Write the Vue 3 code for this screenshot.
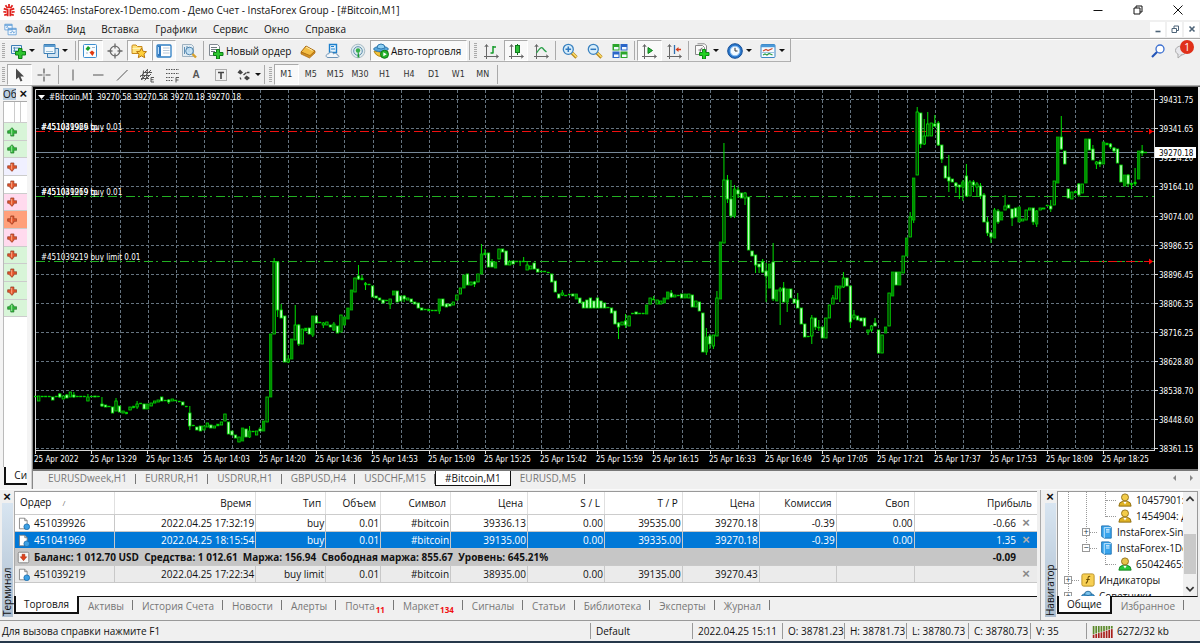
<script setup>
const icons = {
  newChart: '<path d="M1.5 2.5h10v8h-10z" fill="#eaf4fb" stroke="#3d7fb5"/><path d="M3 5h7M3 8h7M4.500 4v5" stroke="#5b93bd" fill="none"/><path d="M8.500 5.500h3.500v3h3.500v3.500h-3.500v3.500h-3.500v-3.500H5.500v-3.500h3z" fill="#2fc52f" stroke="#0d7d18"/>',
  profiles: '<path d="M4.500 5.500h11v9h-11z" fill="#cfe3f2" stroke="#3d7fb5"/><path d="M1 1.500h11v9H1z" fill="#f2f9fd" stroke="#3d7fb5"/><path d="M1 3h11" stroke="#5a9bd0" stroke-width="2"/><path d="M3 8.500h7" stroke="#9cc0d8"/>',
  market: '<rect x="1.500" y="1.500" width="13" height="13" rx="1" fill="#f9fcff" stroke="#3d8ed0"/><path d="M3.500 6l2.500-3 2.500 2-2.500 3z" fill="#18a028"/><path d="M7.500 9.500l2.500-2 2.500 2-2 3.500z" fill="#e23a10"/><path d="M4 10h2M10 4.500h3" stroke="#a0b8cc"/>',
  cross: '<circle cx="8" cy="8" r="4.800" fill="none" stroke="#6a6a6a" stroke-width="1.300"/><path d="M8 .5v5M8 10.500v5M.5 8h5M10.500 8h5" stroke="#6a6a6a" stroke-width="1.300"/>',
  folder: '<path d="M1 3q0-1 1-1h3l1.500 1.500H11v7H1z" fill="#ffe27a" stroke="#c98a1a"/><path d="M1.500 5.500h9" stroke="#fff3b8"/><path d="M10.500 5l1.600 3.300 3.400.4-2.500 2.400.7 3.600-3.200-1.800-3.200 1.800.7-3.600-2.500-2.400 3.400-.4z" fill="#ffd03a" stroke="#b9770e"/>',
  list: '<rect x="1" y="2" width="14" height="12" rx="1" fill="#fff" stroke="#2f7fc4" stroke-width="1.300"/><rect x="1.500" y="2.500" width="3.500" height="11" fill="#2f78bf"/><path d="M7 5h6.500M7 7.500h6.500M7 10h6.500" stroke="#b8c8d8"/><path d="M2.500 4v7" stroke="#bfe0ff"/>',
  tester: '<path d="M1.500 1.500h9l2 2v10h-11z" fill="#e4edf3" stroke="#9fb2c0"/><path d="M3.500 4v7M6 3v4M8 4v5" stroke="#5f8fb4"/><circle cx="8.500" cy="8" r="3.800" fill="#bfe0f5" fill-opacity=".8" stroke="#4e83ad"/><path d="M11.500 11l3.500 3.500" stroke="#d6a02c" stroke-width="2.400"/>',
  order: '<path d="M1.500 1.500h8l2 2v9h-10z" fill="#fdfdfd" stroke="#808890"/><path d="M3 4.500h6M3 6.500h6M3 8.500h4" stroke="#707880"/><path d="M8.500 6.500h3v3h3.500v3h-3.500v3.500h-3V12.500H5.500v-3h3z" fill="#2fc52f" stroke="#0d7d18"/>',
  gold: '<path d="M1 9l5-6 9 5-5 5.500z" fill="#f3bd45" stroke="#a9690f"/><path d="M1 9v2l8.500 4 5.500-5V8l-5 4.500z" fill="#d08f22" stroke="#a9690f" stroke-width=".7"/><path d="M6 4l6.500 3.500" stroke="#fff0ae"/>',
  cloud: '<path d="M4.500 1.500h7v8h-7z" fill="#e7f4fd" stroke="#1e80cc" stroke-width="1.400"/><path d="M6 3.500h3M6 6h4" stroke="#1e80cc"/><path d="M3 14.500c-3 0-2-4 .5-3.500 1-2.500 4.500-2.500 5 0 1.500-1.500 4-.5 3.500 1 2.500 0 2.500 2.500 0 2.500z" fill="#f4f7fa" stroke="#6d93b5"/>',
  signal: '<circle cx="8" cy="8" r="6.800" fill="#dfeaee" stroke="#a9bcc6"/><circle cx="8" cy="8" r="4.300" fill="none" stroke="#5d8fae"/><path d="M8 6l1.500 8.500h-2z" fill="#1c9a32"/><circle cx="8" cy="7.500" r="2.200" fill="#35b04a"/>',
  robot: '<path d="M1 8q7 3 14 0l-1.500 3q-5.500 5-11 0z" fill="#f3c53b" stroke="#b58612"/><ellipse cx="8" cy="6" rx="7.300" ry="2.600" fill="#58a7dc" stroke="#2f78ad"/><path d="M4 5q0-4 4-4t4 4q-4 2-8 0z" fill="#8fd0f4" stroke="#2f78ad"/><circle cx="11.500" cy="11.300" r="4" fill="#24b32c" stroke="#0b7a14"/><path d="M10.300 9.300l3.400 2-3.400 2z" fill="#fff"/>',
  bars: '<path d="M3.500 2v11.500H15M1.800 4l1.700-2.500L5.200 4M13 11.800l2.500 1.700-2.500 1.700M1 13.500h2.500V16" fill="none" stroke="#666"/><path d="M10 3v7.500M10 4h3M7.500 10h2.500" stroke="#149a2a" stroke-width="1.500" fill="none"/>',
  candles: '<path d="M3.500 2v11.500H15M1.800 4l1.700-2.500L5.200 4M13 11.800l2.500 1.700-2.500 1.700M1 13.500h2.500V16" fill="none" stroke="#666"/><path d="M9.500 1v11" stroke="#107a1e"/><rect x="7.500" y="2.500" width="4" height="7" fill="#2fc03a" stroke="#107a1e"/>',
  line: '<path d="M3.500 2v11.500H15M1.800 4l1.700-2.500L5.200 4M13 11.800l2.500 1.700-2.500 1.700M1 13.500h2.500V16" fill="none" stroke="#666"/><path d="M3.500 10Q8 3 9.500 5t4 4" stroke="#2ba04a" stroke-width="1.300" fill="none"/>',
  zoomIn: '<path d="M9.500 9.500l5 5" stroke="#b8871a" stroke-width="3.200"/><path d="M10 9.500l4.500 4.500" stroke="#ffe06b" stroke-width="1.500"/><circle cx="6.300" cy="6.300" r="5" fill="#d8eefb" stroke="#3b82c0" stroke-width="1.300"/><path d="M3.500 6.300h5.600M6.300 3.500v5.600" stroke="#2f78bf" stroke-width="1.500"/>',
  zoomOut: '<path d="M9.500 9.500l5 5" stroke="#b8871a" stroke-width="3.200"/><path d="M10 9.500l4.500 4.500" stroke="#ffe06b" stroke-width="1.500"/><circle cx="6.300" cy="6.300" r="5" fill="#d8eefb" stroke="#3b82c0" stroke-width="1.300"/><path d="M3.500 6.300h5.600" stroke="#2f78bf" stroke-width="1.500"/>',
  tile: '<path d="M.5 1h7v6.500h-7zM8.500 8.500h7V15h-7z" fill="#2ba52b"/><path d="M8.500 1h7v6.500h-7zM.5 8.500h7V15h-7z" fill="#2b66c8"/><path d="M2 4h4.500v2.500H2zM10 4h4.500v2.500H10zM2 11.500h4.500V14H2zM10 11.500h4.500V14H10z" fill="#f4faff"/>',
  scroll: '<path d="M3.500 2v11.500H15M1.800 4l1.700-2.500L5.200 4M13 11.800l2.500 1.700-2.500 1.700M1 13.500h2.500V16" fill="none" stroke="#666"/><path d="M7 4.500l4.500 3L7 10.500z" fill="#23b83a" stroke="#0d7d18"/>',
  shift: '<path d="M3.500 2v11.500H15M1.800 4l1.700-2.500L5.200 4M13 11.800l2.500 1.700-2.500 1.700M1 13.500h2.500V16" fill="none" stroke="#666"/><path d="M8.500 2v9" stroke="#2d6fb0" stroke-width="1.300"/><path d="M9.500 6.500l3-2.500v1.800H15v1.500h-2.500V9z" fill="#d43c1c"/>',
  indicators: '<path d="M1.500 2.500h7l2 2v7h-9zM3.500.8h7l2 2v7" fill="#fafafa" stroke="#888"/><path d="M6 9q1-5 2.500-4M4.500 7h3" stroke="#666" fill="none"/><path d="M8.500 6.500h3v3h3.500v3h-3.500v3.500h-3V12.500H5.500v-3h3z" fill="#20d020" stroke="#0a8a14"/>',
  clock: '<circle cx="8" cy="8" r="7.300" fill="#2876cc" stroke="#164f96"/><circle cx="8" cy="8" r="4.800" fill="#f4faff" stroke="#8ec3f5"/><path d="M8 4.800V8h2.500" stroke="#333" fill="none"/>',
  template: '<rect x="1" y="1.500" width="14" height="13" rx="1" fill="#f6fbff" stroke="#3b86c6"/><path d="M1 3h14" stroke="#4a98d8" stroke-width="2.500"/><path d="M3 8l3-1.500 2 1 4.500-2" stroke="#d04a2c" fill="none" stroke-width="1.200"/><path d="M3 12l2-1 2 1 2-1.500 3.500 1.500" stroke="#2d9d4a" fill="none" stroke-width="1.200"/><path d="M2 9.500h12" stroke="#9fc4e0"/>',
  cursor: '<path d="M5 1.500v11l2.700-2.300 1.800 4.300 1.900-.8-1.900-4.200H13z" fill="#4a4a4a"/>',
  plus: '<path d="M8 1.500v5M8 9.500v5M1.500 8h5M9.500 8h5M8 7.500v1" stroke="#555" stroke-width="1.200"/>',
  vline: '<path d="M8 2.500v11" stroke="#555"/>',
  hline: '<path d="M3 8h10.500" stroke="#555"/>',
  trend: '<path d="M3 13.500L13.500 3" stroke="#555"/>',
  channel: '<path d="M1 10L8 3M2 13L12 3M5.500 13.500L12 7M1.500 8.500h9M4 5.500h9M2 11.500h8M4.500 3.500l-1 9M8.500 2l-1 9" stroke="#555" fill="none"/><path d="M15 10.500h-3v4.500h3M12 12.700h2.500" stroke="#555" fill="none"/>',
  fibo: '<path d="M2 2.500h13M2 6.500h13M2 10.500h8M2 13.500h7" stroke="#555" stroke-dasharray="1.500 1" fill="none"/><path d="M15 10.500h-3V15.500M12 13h2.500" stroke="#555" fill="none"/>',
  label: '<path d="M2.500 2.500h11v11h-11z" fill="none" stroke="#666" stroke-dasharray="1 1"/><path d="M5 5.500h6M8 5.500V12" stroke="#444" stroke-width="1.600"/>',
  arrows: '<path d="M1.500 5.500l2.500-3 3 3-2.500 2zM8 11l2.500-2.500L14 11l-3 2.500z" fill="#444"/><path d="M4 10.500l1 2M7.500 8l3-2.500M11 5.500h2.500" stroke="#444" stroke-width="1.300"/>',
  doc: '<path d="M3 1.500h6.500l3 3v10H3z" fill="#fff" stroke="#777"/><path d="M9.500 1.500v3h3" fill="none" stroke="#777"/><circle cx="12" cy="12" r="3.500" fill="#3ca0e4" stroke="#1a6bab"/>',
  balance: '<rect x="1.500" y="1.500" width="13" height="13" rx="1.500" fill="#f7f7f7" stroke="#777"/><path d="M6.300 4h3.400v3.200H12L8 12 4 7.200h2.300z" fill="#e0421c" stroke="#9c2408" stroke-width=".6"/>',
  up: '<path d="M8 1l3 3.500V6h4.500v4H11v4.500H6V10H1V6h2z" fill="#2fb63a" stroke="#1b6f24"/><path d="M7.500 3v10" stroke="#a5eba5" stroke-width="1.500"/>',
  down: '<path d="M8 15l3-3.500V10h4.500V6H11V1.500H6V6H1v4h2z" fill="#e2562c" stroke="#86311c"/><path d="M7.500 3v9" stroke="#ffb18f" stroke-width="1.500"/>',
  user: '<path d="M1 15q0-5 4.500-5.500h5Q15 10 15 15z" fill="#dfb224" stroke="#8c6a12"/><path d="M6 10l2 3 2-3" fill="#fff"/><circle cx="8" cy="5" r="4" fill="#f3cc4a" stroke="#8c6a12"/>',
  userOn: '<path d="M1 15q0-5 4.500-5.500h5Q15 10 15 15z" fill="#28c83a" stroke="#128020"/><path d="M6 10l2 3 2-3" fill="#fff"/><circle cx="8" cy="5" r="4" fill="#e6c34a" stroke="#8c6a12"/>',
  server: '<path d="M3 1h8l3 1.500V15H6l-3-2z" fill="#38a3ec" stroke="#1c6fb0"/><path d="M6 3h8M6 3v12" stroke="#d3efff"/><path d="M8 5.500h4M8 8h4" stroke="#eaf8ff" stroke-width="1.300"/>',
  fx: '<rect x="1" y="1" width="14" height="14" rx="2" fill="#f7cf53" stroke="#b38a1c"/><path d="M10.500 4Q8 3 8 6.500T5.500 12M6 7.500h4" stroke="#6b4d00" fill="none" stroke-width="1.200"/>',
  expert: '<ellipse cx="8" cy="8.500" rx="7.500" ry="3.500" fill="#3b94cf" stroke="#1f6596"/><path d="M4 6.500q0-4 4-4t4 4q-4 2-8 0z" fill="#7cc3ec" stroke="#1f6596"/><path d="M2 12h12l-2 3H4z" fill="#e3b83a"/>',
}

const menu = ['Файл', 'Вид', 'Вставка', 'Графики', 'Сервис', 'Окно', 'Справка']
const panelTools = [
  { icon: 'market', name: 'Обзор рынка', on: true },
  { icon: 'cross', name: 'Окно данных' },
  { icon: 'folder', name: 'Навигатор', on: true },
  { icon: 'list', name: 'Терминал', on: true },
  { icon: 'tester', name: 'Тестер стратегий' },
]
const serviceTools = [
  { icon: 'gold', name: 'MetaEditor' },
  { icon: 'cloud', name: 'Хостинг' },
  { icon: 'signal', name: 'Сигналы' },
]
const styleTools = [
  { icon: 'bars', name: 'Бары' },
  { icon: 'candles', name: 'Свечи', on: true },
  { icon: 'line', name: 'Линия' },
]
const zoomTools = [
  { icon: 'zoomIn', name: 'Увеличить' },
  { icon: 'zoomOut', name: 'Уменьшить' },
  { icon: 'tile', name: 'Окна мозаикой' },
]
const shiftTools = [
  { icon: 'scroll', name: 'Автопрокрутка', on: true },
  { icon: 'shift', name: 'Сдвиг графика' },
]
const dropTools = [
  { icon: 'indicators', name: 'Индикаторы' },
  { icon: 'clock', name: 'Периоды' },
  { icon: 'template', name: 'Шаблоны' },
]
const pointerTools = [
  { icon: 'cursor', name: 'Курсор', on: true },
  { icon: 'plus', name: 'Перекрестие' },
]
const drawTools = [
  { icon: 'vline', name: 'Вертикальная линия' },
  { icon: 'hline', name: 'Горизонтальная линия' },
  { icon: 'trend', name: 'Трендовая линия' },
  { icon: 'channel', name: 'Канал' },
  { icon: 'fibo', name: 'Фибоначчи' },
  { text: 'A', name: 'Текст' },
  { icon: 'label', name: 'Метка' },
]
const periods = ['M1', 'M5', 'M15', 'M30', 'H1', 'H4', 'D1', 'W1', 'MN']

const quotes = [
  ['up', 'green'], ['up', 'green'], ['down', 'lilac'], ['down', 'white'], ['down', 'pink'], ['down', 'salmon'],
  ['down', 'pink'], ['down', 'green'], ['down', 'green'], ['down', 'green'], ['up', 'green'],
]

/* Candles: kind, body top, body bottom, optional high and low.
   w = falling, u = rising, k = rising with solid body, j = doji */
const series = `
j396/397 u396/401 j396/397 j396/397 j396/397 w397/400 j396/397 w394/397/393/398 u396/399 w395/398/394/398 u392/397 w395/397/392/398
j396/397 j396/397 j396/397 u397/401/394/401 j396/397 w396/397 j396/397 w404/406/397/407 w405/407 j406/407 w407/413 u401/411/398/411
w406/412 u411/413 j412/414 u407/410 j406/408 u404/407/401/409 j403/404 w404/409 k404/409 u403/406 u401/403 u400/402
w397/401 j400/401 w400/402/399/404 u399/401 j400/401 j401/402 w402/405 j406/407 w413/426/406/430 j425/426 w427/430 w426/431
u426/430 u423/427 w425/428 u426/428 j424/426 u422/425 u414/421 w422/434 w431/435 w435/438 u437/442 k428/441
w429/437 k431/437/426/438 j431/432 u431/435 w429/431/427/431 k421/431 u397/422 k334/397 u262/334/258/334 w262/310/262/317
w310/318/304/318 w316/362 u359/362/355/363 k339/359 u325/340/305/340 w325/344/324/346 u329/344 j328/331 w328/334 k316/335/316/337
w316/323 j322/323 u323/325/322/328 u322/325 w325/327 k324/330/322/331 w326/333 u315/332 k317/325 k308/319 k290/310 u278/292
w276/279/265/280 j278/280/275/280 j283/285/282/290 j284/285 w286/297 w296/298 w298/300 w300/303 j300/301 u299/304/299/309
k291/295 w291/302 w296/301 w296/299/295/302 u298/300 w299/302 w302/304 w303/308 w308/310 j309/310 j309/311 j310/311
j310/311 k299/311/299/314 w299/306 w304/307 w304/306 u302/305 u295/300 u288/294 k275/288 w274/285 u282/285 w282/284/281/287
u274/282 k254/274/244/274 j253/255/249/255 w253/267 w262/267/259/267 k262/268 u249/259 w249/252 w251/265 u262/265/260/265
w261/264 j261/262 j261/262/261/266 j261/262/257/262 u265/270/261/270 u266/269 w263/269 w269/272 j271/272 j271/272
j272/273 w274/282 w281/292 w294/298 u293/295/290/296 j295/296 j294/295 w294/296 k294/299 w298/303 w302/308 w300/308
w298/308 w301/308 w298/308 w301/308 w303/308 j307/308 w308/313 w311/324 w323/327/322/339 u322/325 w321/325/314/328 u316/326
j313/314 w312/314 j313/314 j313/314 k305/314 u298/304 j299/300/296/300 u300/304 u301/304 k298/303 k292/299 w293/297/290/298
u295/297 j295/296 w294/298 k294/298 u294/298 w295/307 u301/307 w302/311 w313/352 k337/352/328/355 w336/344/334/349 u335/346/335/349
u298/336/291/336 k242/299 u180/243/143/243 w180/199/175/203 w199/216/180/218 k189/216/185/218 w190/194/187/198 w193/198 u193/198/192/205
w197/250 w251/256 w255/265/255/273 w264/267/264/273 w262/272/259/273 w271/276/263/302 k264/288 w262/299/243/301 k290/301
u289/291/287/325 w288/302/282/302 k289/302/289/312 w289/298 w299/303 w300/308/293/308 w308/324 w324/337 j336/337 u318/336/315/344
w318/327/318/330 j327/328/320/331 w327/338 u318/338 u305/318 u298/304/295/304 u286/299 u286/288/286/302 u278/287/272/288 w278/286
w286/322/286/328 u315/318/310/320 w316/320 w318/321 w318/326 u330/332/330/335 u326/330/325/332 w323/326/318/326 w330/353
u335/353 k327/333 u293/326 k272/296 w272/285 k272/285 u256/273 k238/256 u217/237/212/237 k178/220/178/223 u112/175/107/175
w113/144/113/148 u136/144/119/145 u124/136/112/136 u123/136 w124/126/115/127 w123/145/121/146 w145/159/145/163 w166/178
w177/181/155/192 w179/182 w183/186/182/193 w185/187/185/199 k182/187/180/201 w176/196/164/197 u182/196/180/196 w182/185/180/192
u184/187/182/197 w186/196/183/199 w195/222/193/222 w222/233/217/236 w233/237/232/243 k210/238/208/238 w211/222/209/224 k212/220
u206/210/195/210 w205/208 w209/218/209/226 w208/217 k207/222 u219/221 u210/220 u208/210 w208/222/208/225 k211/224/210/227
u208/210 u208/209 j205/206 w206/209/200/212 u181/205 k137/183 w137/149/116/150 w151/164 w189/198 u192/199 j191/193
w184/195/183/197 u184/193 k139/183 w139/150 w149/160/145/160 u162/164/161/169 w162/164/160/167 k142/164 j143/145 w144/147/143/149
w148/151/147/153 w149/163 w165/182 k175/186 w175/184/174/187 j183/185/183/189 j182/184/168/186 k151/179 w151/153/145/156 j152/153
`
const candles = series.trim().split(/\s+/).map((t, i) => {
  const [top, bottom, high, low] = t.slice(1).split('/').map(Number)
  return { kind: t[0], x: 35.2 + i * 3.514, top, h: Math.max(bottom - top, 1), high: high || top, low: low || bottom }
})
const gridX = Array.from({ length: 39 }, (_, i) => Math.round(63.3 + i * 28.11) + 0.5)
const gridY = Array.from({ length: 13 }, (_, i) => Math.round(99.3 + i * 29.06) + 0.5)
const prices = ['39431.75', '39341.65', '39254.20', '39164.10', '39074.00', '38986.55', '38896.45', '38806.35', '38716.25', '38628.80', '38538.70', '38448.60', '38361.15']
const times = ['2022', '13:29', '13:45', '14:03', '14:20', '14:36', '14:53', '15:09', '15:25', '15:42', '15:59', '16:15', '16:33', '16:49', '17:05', '17:21', '17:37', '17:53', '18:09', '18:25']
const levels = [
  { y: 131.5, kind: 'stop', notes: ['#451039926 buy 0.01', '#451041969 tp'] },
  { y: 196.5, kind: 'entry', notes: ['#451041969 buy 0.01', '#451039219 tp'] },
  { y: 261.5, kind: 'entry', notes: ['#451039219 buy limit 0.01'] },
]

const chartTabs = ['EURUSDweek,H1', 'EURRUR,H1', 'USDRUR,H1', 'GBPUSD,H4', 'USDCHF,M15', '#Bitcoin,M1', 'EURUSD,M5']

const columns = [
  ['Ордер', 100], ['Время', 141], ['Тип', 70], ['Объем', 55], ['Символ', 70], ['Цена', 77],
  ['S / L', 77], ['T / P', 78], ['Цена', 77], ['Комиссия', 77], ['Своп', 78], ['Прибыль', 123],
]
const total = columns.reduce((s, c) => s + c[1], 0)
const openOrders = [
  ['451039926', '2022.04.25 17:32:19', 'buy', '0.01', '#bitcoin', '39336.13', '0.00', '39535.00', '39270.18', '-0.39', '0.00', '-0.66'],
  ['451041969', '2022.04.25 18:15:54', 'buy', '0.01', '#bitcoin', '39135.00', '0.00', '39335.00', '39270.18', '-0.39', '0.00', '1.35'],
]
const pending = ['451039219', '2022.04.25 17:22:34', 'buy limit', '0.01', '#bitcoin', '38935.00', '0.00', '39135.00', '39270.43', '', '', '']
const termTabs = [
  ['Торговля'], ['Активы'], ['История Счета'], ['Новости'], ['Алерты'], ['Почта', '11'], ['Маркет', '134'],
  ['Сигналы'], ['Статьи'], ['Библиотека'], ['Эксперты'], ['Журнал'],
]
const tree = [
  { icon: 'user', text: '10457901: Д', level: 3 },
  { icon: 'user', text: '1454904: Д', level: 3 },
  { icon: 'server', text: 'InstaForex-Singapore', level: 2, box: '+' },
  { icon: 'server', text: 'InstaForex-1Demo', level: 2, box: '−' },
  { icon: 'userOn', text: '65042465: Д', level: 3 },
  { icon: 'fx', text: 'Индикаторы', level: 1, box: '+' },
  { icon: 'expert', text: 'Советники', level: 1, box: '+' },
]
</script>

<template>
  <div class="app">
    <header class="title">
      <svg class="logo" viewBox="0 0 16 16"><g fill="none" stroke="#e0201c" stroke-width="2"><path d="M6.500 15V8L2 6.500M9.500 15V8L14 6.500M6.500 6L4 2.500M9.500 6L12 2.500M8 6V1M5 10.500l-3.500-.5M11 10.500l3.500-.5M5.500 13l-3 1M10.500 13l3 1" /></g></svg>
      <span class="caption">65042465: InstaForex-1Demo.com - Демо Счет - InstaForex Group - [#Bitcoin,M1]</span>
      <div class="winbtns">
        <button aria-label="Свернуть"><svg viewBox="0 0 10 10"><path d="M.5 5.500h9" /></svg></button>
        <button aria-label="Восстановить"><svg viewBox="0 0 10 10"><path d="M1 3h6v6H1zM3 3V1h6v6H7" /></svg></button>
        <button aria-label="Закрыть"><svg viewBox="0 0 10 10"><path d="M.5.5l9 9M9.500.5l-9 9" /></svg></button>
      </div>
    </header>

    <nav class="menu">
      <svg class="doclogo" viewBox="0 0 16 16"><path d="M1 1.500h9v7H1zM5 6.500h10v8H5z" fill="#f5faff" stroke="#5c9bd6" /><path d="M1 2.500h9M5 7.500h10" stroke="#5c9bd6" stroke-width="1.500" /><path d="M7 11l1.500 1.500 2-3 1.500 3 1.500-2M3 6l1-2 1 2" fill="none" stroke="#5c9bd6" /></svg>
      <button v-for="m in menu" :key="m">{{ m }}</button>
      <div class="mdi">
        <button aria-label="Свернуть окно"><svg viewBox="0 0 8 8"><path d="M1.500 6.500h5" /></svg></button>
        <button aria-label="Восстановить окно"><svg viewBox="0 0 8 8"><path d="M1 3.500h4.500v4H1zM3 3V1h4.500v4.500H6" class="thin" /></svg></button>
        <button aria-label="Закрыть окно"><svg viewBox="0 0 8 8"><path d="M1.500 1.500l5 5M6.500 1.500l-5 5" /></svg></button>
      </div>
    </nav>

    <div class="bar">
      <div class="strip framed">
        <i class="grip"></i>
        <button class="drop" aria-label="Новый график"><svg viewBox="0 0 16 16" v-html="icons.newChart"></svg><i class="caret"></i></button>
        <button class="drop" aria-label="Профили"><svg viewBox="0 0 16 16" v-html="icons.profiles"></svg><i class="caret"></i></button>
        <i class="sep"></i>
        <div class="group g5"><button v-for="t in panelTools" :key="t.icon" :class="{ on: t.on }" :aria-label="t.name"><svg viewBox="0 0 16 16" v-html="icons[t.icon]"></svg></button></div>
        <i class="sep"></i>
        <button class="wide order"><svg viewBox="0 0 16 16" v-html="icons.order"></svg>Новый ордер</button>
        <div class="group g3"><button v-for="t in serviceTools" :key="t.icon" :aria-label="t.name"><svg viewBox="0 0 16 16" v-html="icons[t.icon]"></svg></button></div>
        <button class="wide on"><svg viewBox="0 0 16 16" v-html="icons.robot"></svg>Авто-торговля</button>
        <i class="sep"></i><i class="grip"></i>
        <div class="group g3"><button v-for="t in styleTools" :key="t.icon" :class="{ on: t.on }" :aria-label="t.name"><svg viewBox="0 0 16 16" v-html="icons[t.icon]"></svg></button></div>
        <i class="sep"></i>
        <div class="group g3"><button v-for="t in zoomTools" :key="t.icon" :aria-label="t.name"><svg viewBox="0 0 16 16" v-html="icons[t.icon]"></svg></button></div>
        <i class="sep"></i>
        <div class="group g2"><button v-for="t in shiftTools" :key="t.icon" :class="{ on: t.on }" :aria-label="t.name"><svg viewBox="0 0 16 16" v-html="icons[t.icon]"></svg></button></div>
        <i class="sep"></i>
        <button v-for="t in dropTools" :key="t.icon" class="drop" :aria-label="t.name"><svg viewBox="0 0 16 16" v-html="icons[t.icon]"></svg><i class="caret"></i></button>
      </div>
      <div class="right">
        <button aria-label="Поиск"><svg viewBox="0 0 16 16"><circle cx="10" cy="6" r="4" fill="#fff" stroke="#3b6fd0" stroke-width="1.300" /><path d="M7 9l-5 5" stroke="#2355b8" stroke-width="2.200" /></svg></button>
        <button class="chat" aria-label="Сообщения"><svg viewBox="0 0 16 16"><ellipse cx="7" cy="7.500" rx="5.500" ry="4.500" fill="#e8e8ec" stroke="#aaa" /><path d="M4 11v4l4-3.500" fill="#e8e8ec" stroke="#aaa" /></svg><b class="badge">1</b></button>
      </div>
    </div>

    <div class="bar second">
      <div class="strip">
        <i class="grip"></i>
        <div class="group g2"><button v-for="t in pointerTools" :key="t.icon" :class="{ on: t.on }" :aria-label="t.name"><svg viewBox="0 0 16 16" v-html="icons[t.icon]"></svg></button></div>
        <i class="sep"></i>
        <div class="group g7"><button v-for="t in drawTools" :key="t.name" :aria-label="t.name"><svg v-if="t.icon" viewBox="0 0 16 16" v-html="icons[t.icon]"></svg><span v-else class="letter">{{ t.text }}</span></button></div>
        <button class="drop" aria-label="Стрелки"><svg viewBox="0 0 16 16" v-html="icons.arrows"></svg><i class="caret"></i></button>
        <i class="sep"></i><i class="grip"></i>
        <div class="group g9"><button v-for="(p, i) in periods" :key="p" class="period" :class="{ on: i === 0 }">{{ p }}</button></div>
        <i class="sep"></i>
      </div>
    </div>

    <main class="work">
      <aside class="watch">
        <div class="watchhead"><span>Об</span><button aria-label="Закрыть обзор рынка">×</button></div>
        <div class="watchlist">
          <div class="first"></div>
          <div v-for="(q, i) in quotes" :key="i" class="quote" :class="q[1]"><svg viewBox="0 0 16 16" v-html="icons[q[0]]"></svg></div>
        </div>
        <button class="watchtab">Си</button>
      </aside>
      <section class="charts">
        <svg class="chart" role="img" aria-label="#Bitcoin,M1">
          <g transform="translate(-34 -87)">
            <g class="grid">
              <line v-for="x in gridX" :key="x" :x1="x" :x2="x" y1="90" y2="450" />
              <line v-for="y in gridY" :key="y" x1="36" x2="1154" :y1="y" :y2="y" />
            </g>
            <path class="frame" d="M1154 89.500H35.500V451M35 450.500h1119M1154.500 89v362" />
            <g class="frame">
              <line v-for="y in gridY" :key="y" x1="1155" x2="1158" :y1="y" :y2="y" />
              <line v-for="(t, i) in times" :key="t" :x1="Math.round(35 + i * 56.22) + 0.5" :x2="Math.round(35 + i * 56.22) + 0.5" y1="451" y2="454" />
            </g>
            <line class="bid" x1="36" x2="1154" y1="152.500" y2="152.500" />
            <line v-for="l in levels" :key="l.y" :class="l.kind" x1="36" x2="1154" :y1="l.y" :y2="l.y" />
            <line class="stop" x1="1090" x2="1150" y1="261.500" y2="261.500" />
            <path d="M1149 128.500l4 3-4 3zM1149 258.500l4 3-4 3z" fill="#f00" />
            <g v-for="(c, i) in candles" :key="i" :class="c.kind">
              <line :x1="c.x" :x2="c.x" :y1="c.high" :y2="c.low" />
              <rect :x="c.x - 1.2" :y="c.top" width="2.400" :height="c.h" />
            </g>
            <path d="M38 95h7l-3.500 4z" fill="#fff" />
            <text x="49" y="100">#Bitcoin,M1</text>
            <text x="97" y="100">39270.58 39270.58 39270.18 39270.18</text>
            <template v-for="l in levels" :key="l.y"><text v-for="n in l.notes" :key="n" x="41" :y="l.y - 2">{{ n }}</text></template>
            <text v-for="(p, i) in prices" :key="p" x="1159" :y="gridY[i] + 3">{{ p }}</text>
            <rect x="1155" y="147" width="41" height="11" fill="#fff" />
            <text class="now" x="1159" y="156">39270.18</text>
            <text v-for="(t, i) in times" :key="t" :x="Math.round(34 + i * 56.22)" y="462">25 Apr {{ t }}</text>
          </g>
        </svg>
        <div class="charttabs">
          <button v-for="t in chartTabs" :key="t" :class="{ active: t[0] === '#' }">{{ t }}</button>
          <span class="arrows"><i class="tri left"></i><i class="tri"></i></span>
        </div>
      </section>
    </main>

    <div class="lower">
      <section class="dock terminal">
        <div class="side"><button aria-label="Закрыть терминал">×</button><span>Терминал</span></div>
        <div class="pane">
          <div class="body">
            <table>
              <colgroup><col v-for="(c, i) in columns" :key="i" :style="{ width: (c[1] / total) * 100 + '%' }" /></colgroup>
              <thead><tr><th v-for="(c, i) in columns" :key="i">{{ c[0] }}<i v-if="i === 0" class="sort">/</i></th></tr></thead>
              <tbody>
                <tr v-for="(r, j) in openOrders" :key="r[0]" :class="{ selected: j === 1 }">
                  <td v-for="(v, i) in r" :key="i"><svg v-if="i === 0" viewBox="0 0 16 16" v-html="icons.doc"></svg>{{ v }}<button v-if="i === 11" aria-label="Закрыть ордер">×</button></td>
                </tr>
                <tr class="sum">
                  <td colspan="11"><svg viewBox="0 0 16 16" v-html="icons.balance"></svg>Баланс: 1 012.70 USD&nbsp; Средства: 1 012.61&nbsp; Маржа: 156.94&nbsp; Свободная маржа: 855.67&nbsp; Уровень: 645.21%</td>
                  <td>-0.09</td>
                </tr>
                <tr class="pending">
                  <td v-for="(v, i) in pending" :key="i"><svg v-if="i === 0" viewBox="0 0 16 16" v-html="icons.doc"></svg>{{ v }}<button v-if="i === 11" aria-label="Удалить ордер">×</button></td>
                </tr>
              </tbody>
            </table>
          </div>
          <div class="tabs">
            <button v-for="(t, i) in termTabs" :key="t[0]" :class="{ active: i === 0 }">{{ t[0] }}<sub v-if="t[1]">{{ t[1] }}</sub></button>
          </div>
        </div>
      </section>
      <section class="dock navigator">
        <div class="side"><button aria-label="Закрыть навигатор">×</button><span>Навигатор</span></div>
        <div class="pane">
          <div class="body treebox">
            <ul>
              <li v-for="n in tree" :key="n.text" :class="'l' + n.level"><i v-if="n.box" class="box">{{ n.box }}</i><i class="dots"></i><svg viewBox="0 0 16 16" v-html="icons[n.icon]"></svg><span>{{ n.text }}</span></li>
            </ul>
            <div class="scroll">
              <svg viewBox="0 0 10 10"><path d="M2 6.500l3-3 3 3" /></svg>
              <i></i>
              <svg viewBox="0 0 10 10"><path d="M2 3.500l3 3 3-3" /></svg>
            </div>
          </div>
          <div class="tabs"><button class="active">Общие</button><button>Избранное</button></div>
        </div>
      </section>
    </div>

    <footer class="status">
      <span class="help">Для вызова справки нажмите F1</span>
      <span class="s-profile">Default</span>
      <span class="s-date">2022.04.25 15:11</span>
      <span class="s-val">O: 38781.23</span>
      <span class="s-val">H: 38781.73</span>
      <span class="s-val">L: 38780.73</span>
      <span class="s-val">C: 38780.73</span>
      <span class="s-vol">V: 35</span>
      <span class="s-net"><svg viewBox="0 0 22 12"><path v-for="i in 8" :key="i" :d="`M${i * 2.6 - 1} 0v${9 - i * 0.8}`" stroke="#5c8a2a" stroke-width="1.700" /><path v-for="i in 8" :key="'r' + i" :d="`M${i * 2.6 - 1} 12V${9.500 - i * 0.8}`" stroke="#a8201c" stroke-width="1.700" /></svg>6272/32 kb</span>
    </footer>
    <div class="edge"></div>
  </div>
</template>

<style>
body { margin: 0; }
</style>

<style scoped>
* { box-sizing: border-box; }
.app { min-height: 100vh; display: flex; flex-direction: column; background: #f0f0f0; color: #111; font: 10px/14px "Open Sans", "Noto Sans", sans-serif; overflow: hidden; }
button { font: inherit; color: inherit; background: none; border: 0; padding: 0; margin: 0; white-space: nowrap; }
i { font-style: normal; }
.title { height: 20px; background: #fff; display: flex; align-items: center; padding-left: 2px; }
.logo { width: 14px; height: 16px; margin-right: 4px; }
.caption { flex: 1; }
.winbtns { display: flex; padding-right: 2px; }
.winbtns button { width: 40px; height: 18px; display: flex; align-items: center; justify-content: center; }
.winbtns svg { width: 10px; height: 10px; fill: none; stroke: #111; }
.menu { height: 18px; display: flex; align-items: center; gap: 16px; padding-left: 4px; }
.doclogo { width: 13px; height: 13px; margin-right: -8px; }
.mdi { margin-left: auto; display: flex; gap: 2px; padding-right: 1px; }
.mdi button { width: 15px; height: 15px; background: #fff; display: flex; align-items: center; justify-content: center; }
.mdi svg { width: 8px; height: 8px; fill: none; stroke: #4e6478; stroke-width: 1.6; }
.mdi .thin { stroke-width: 1; }
.bar { height: 24px; border-top: 1px solid #a8a8a8; box-shadow: inset 0 1px #fff; display: flex; justify-content: space-between; }
.second { border-top-color: transparent; box-shadow: none; height: 23px; }
.strip { display: flex; align-items: stretch; padding: 1px 0 0; }
.framed { border-right: 1px solid #aaa; border-bottom: 1px solid #b0b0b0; }
.grip { width: 3px; margin: 3px 2px; background: repeating-linear-gradient(#aaa 0 1px, #eee 1px 2px); }
.sep { width: 1px; margin: 1px 2px; background: #aaa; }
.group { display: flex; }
.group button { flex: 1; display: flex; align-items: center; justify-content: center; border: 1px solid transparent; }
.g2 { width: 49px; } .g3 { width: 74px; } .g5 { width: 123px; } .g7 { width: 172px; } .g9 { width: 221px; }
.bar button svg { width: 16px; height: 16px; flex: none; }
.bar .on { background: #f9f9f9; border: 1px solid #aaa; border-right-color: #fff; border-bottom-color: #fff; }
.drop { width: 33px; display: flex; align-items: center; gap: 3px; padding-left: 3px; }
.second .drop { width: 29px; }
.caret { border: 3px solid transparent; border-top-color: #111; border-bottom: 0; }
.wide { display: flex; align-items: center; gap: 2px; padding: 0 4px 0 2px; width: 97px; }
.order { width: 90px; }
.right { display: flex; align-items: center; gap: 8px; padding-right: 6px; }
.right button { width: 16px; height: 16px; }
.right .chat { position: relative; width: 20px; text-align: left; }
.badge { position: absolute; right: 0; top: -3px; width: 14px; height: 14px; border-radius: 50%; background: #e0301a; color: #fff; font-size: 10px; line-height: 14px; font-weight: 400; text-align: center; }
.letter { font: 700 10px/12px "Liberation Sans", sans-serif; color: #555; }
.period { font: 8px/12px "DejaVu Sans", sans-serif; color: #333; }
.work { flex: 1; display: flex; min-height: 0; border-top: 1px solid #aaa; }
.watch { width: 32px; border-right: 1px solid #d0d0d0; display: flex; flex-direction: column; padding: 0 4px 4px 3px; background: #f4f4f4; }
.watchhead { height: 15px; display: flex; justify-content: space-between; align-items: center; }
.watchhead span { background: #b9cde0; width: 13px; overflow: hidden; line-height: 12px; }
.watchhead button, .side button { font: 700 13px/12px "Liberation Sans", sans-serif; }
.watchlist { flex: 1; background: #fff; border-left: 1px solid #bbb; border-top: 1px solid #aaa; }
.first { height: 21px; border-bottom: 1px solid #ccc; background: linear-gradient(90deg, transparent 10px, #ccc 10px 11px, transparent 11px 16px, #ccc 16px 17px, transparent 17px); }
.quote { height: 18px; border-bottom: 1px solid #ccc; display: flex; align-items: center; padding-left: 3px; }
.quote:nth-child(3n) { height: 17px; }
.quote svg { width: 10px; height: 10px; }
.green { background: #d8f5d8; } .lilac { background: #f0f0ff; } .white { background: #fff; } .pink { background: #ffdaee; } .salmon { background: #ffa07a; }
.watchtab { height: 18px; text-align: right; border: 2px solid #111; border-top: 0; border-right: 0; background: #fff; margin-left: 1px; overflow: hidden; }
.charts { flex: 1; min-width: 0; display: flex; flex-direction: column; border-left: 1px solid #888; border-top: 1px solid #666; padding-right: 2px; }
.chart { flex: 1; width: 100%; min-height: 200px; background: #000; display: block; border-left: 1px solid #000; }
.chart text { font: 8px "DejaVu Sans Condensed", "DejaVu Sans", sans-serif; fill: #fff; white-space: pre; }
.chart .now { fill: #000; }
.grid line { stroke: #65737f; stroke-dasharray: 3 2; }
.frame { fill: none; stroke: #d8d8d8; }
.bid { stroke: #778899; }
.stop { stroke: #f01010; stroke-dasharray: 9 3 2 4; }
.entry { stroke: #22b022; stroke-dasharray: 9 3 2 4; }
.chart g > line { stroke-width: 1; }
.w line, .u line, .k line, .j line { stroke: #00e000; }
.w rect { fill: #c4ffc4; stroke: #00e000; stroke-width: .8; }
.u rect { fill: #003c00; stroke: #00e000; stroke-width: .8; }
.k rect { fill: #008c00; stroke: #00b800; stroke-width: .8; }
.j rect { fill: #00d800; stroke: #00d800; stroke-width: .4; }
.charttabs { height: 20px; border-top: 2px solid #777; display: flex; align-items: flex-start; color: #777; padding-left: 6px; background: #f0f0f0; }
.charttabs button { padding: 0 9px; line-height: 14px; position: relative; }
.charttabs button:not(.active)::after, .tabs button:not(.active)::after { content: ""; position: absolute; right: 0; top: 3px; height: 10px; width: 1px; background: #777; }
.charttabs .active { background: #fff; color: #111; border: 1px solid #111; border-top: 0; height: 15px; }
.arrows { margin-left: auto; display: flex; gap: 14px; padding: 4px 5px 0 0; }
.tri { border: 3px solid transparent; border-left-color: #888; border-right: 0; }
.left { border-left: 0; border-right: 3px solid #888; }
.lower { display: flex; height: 131px; border-top: 1px solid #fafafa; }
.dock { display: flex; min-width: 0; }
.terminal { flex: 1; padding-right: 3px; }
.navigator { width: 160px; border-left: 1px solid #aaa; padding: 0 2px; }
.side { width: 14px; display: flex; flex-direction: column; align-items: center; padding-bottom: 3px; }
.side button { height: 13px; line-height: 13px; }
.side span { flex: 1; width: 11px; background: linear-gradient(#aebfd0, #d8e5f1); writing-mode: vertical-rl; transform: rotate(180deg); line-height: 11px; text-align: left; padding-top: 1px; }
.pane { flex: 1; min-width: 0; display: flex; flex-direction: column; padding-top: 1px; }
.body { height: 106px; background: #fff; border-top: 1px solid #999; border-left: 1px solid #aaa; border-bottom: 1px solid #111; overflow: hidden; }
table { width: 100%; border-collapse: collapse; table-layout: fixed; }
th { height: 22px; font-weight: 400; text-align: right; padding: 0 4px; border-right: 1px solid #e0e0e0; border-bottom: 1px solid #ccc; }
th:first-child, td:first-child { text-align: left; }
th:first-child { padding-left: 5px; }
th:last-child { padding-right: 5px; }
.sort { color: #777; margin-left: 11px; font-size: 8px; }
td { height: 17px; padding: 0 1px 0 2px; line-height: 16px; text-align: right; white-space: nowrap; overflow: hidden; border-right: 1px solid #c8c8c8; border-bottom: 1px solid #c8c8c8; }
td:last-child, th:last-child { border-right: 0; }
td svg { width: 13px; height: 13px; vertical-align: middle; margin-right: 4px; }
td button { color: #888; font: 700 13px/12px "Liberation Sans", sans-serif; width: 20px; text-align: center; }
.selected td { background: #0078d7; color: #fff; }
.selected button { color: #b0b0b0; }
.sum td { background: #c6c6c6; font-weight: 700; border-right: 0; }
.sum td:last-child { padding-right: 21px; }
.pending td { background: #ebebeb; }
.tabs { display: flex; align-items: flex-start; color: #777; }
.tabs button { padding: 0 9px; line-height: 16px; height: 18px; position: relative; }
.tabs .active { background: #fff; color: #111; border: solid #111; border-width: 0 2px 2px; margin-top: -1px; padding: 0 8px; }
sub { color: #f01010; font-size: 8px; line-height: 8px; font-weight: 700; margin-left: 1px; }
.treebox { display: flex; border: 1px solid #999; border-bottom-color: #111; }
ul {
  flex: 1; min-width: 0; margin: 0; padding: 0; list-style: none; overflow: hidden;
  background:
    repeating-linear-gradient(#999 0 1px, #fff 1px 2px) 10px 0 / 1px 100% no-repeat,
    repeating-linear-gradient(#999 0 1px, #fff 1px 2px) 28px 0 / 1px 56px no-repeat,
    repeating-linear-gradient(#999 0 1px, #fff 1px 2px) 47px 0 / 1px 25px no-repeat,
    repeating-linear-gradient(#999 0 1px, #fff 1px 2px) 47px 62px / 1px 11px no-repeat;
}
li { height: 16px; display: flex; align-items: center; white-space: nowrap; overflow: hidden; }
li svg { width: 14px; height: 14px; flex: none; margin-right: 4px; }
.l1 { padding-left: 6px; } .l2 { padding-left: 24px; } .l3 { padding-left: 48px; }
.box { width: 8px; height: 8px; border: 1px solid #999; background: #fff; font-size: 9px; line-height: 6px; text-align: center; flex: none; color: #234; }
.dots { width: 7px; border-top: 1px dotted #999; flex: none; margin-right: 2px; }
.l3 .dots { width: 10px; }
.scroll { width: 14px; background: #f0f0f0; display: flex; flex-direction: column; align-items: center; justify-content: space-between; }
.scroll svg { width: 12px; height: 14px; fill: none; stroke: #333; stroke-width: 1.4; }
.scroll i { width: 12px; height: 40px; background: #c9c9c9; margin-top: 20px; }
.status { height: 21px; border-top: 1px solid #999; display: flex; align-items: center; }
.status span { height: 16px; line-height: 16px; border-left: 1px solid #999; padding-left: 5px; white-space: nowrap; }
.status .help { flex: 1; border: 0; padding-left: 2px; }
.s-profile { width: 102px; } .s-date { width: 90px; } .s-val { width: 62px; } .s-vol { width: 56px; }
.s-net { width: 114px; }
.s-net svg { width: 22px; height: 12px; vertical-align: middle; margin-right: 3px; }
.edge { height: 2px; background: #26384a; }
</style>
